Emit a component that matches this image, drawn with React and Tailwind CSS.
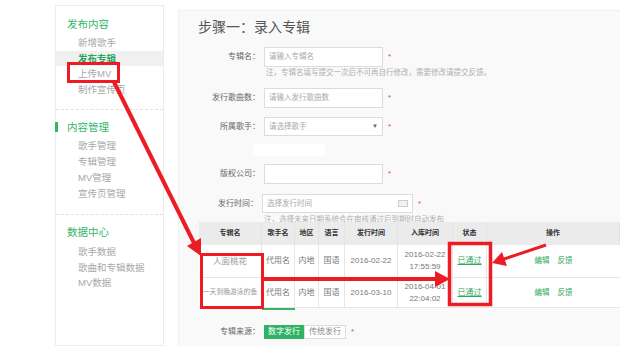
import React from "react";

const RED = "#ec1c24";

const menu = [
  {
    title: "发布内容",
    items: ["新增歌手", "发布专辑", "上传MV", "制作宣传页"],
    active: "发布专辑",
    step: "h-[15.5px] leading-[15.5px]",
  },
  {
    title: "内容管理",
    items: ["歌手管理", "专辑管理", "MV管理", "宣传页管理"],
    bar: true,
    step: "h-[16px] leading-[16px]",
  },
  {
    title: "数据中心",
    items: ["歌手数据", "歌曲和专辑数据", "MV数据"],
    step: "h-[15.5px] leading-[15.5px]",
  },
];

const cols = ["专辑名", "歌手名", "地区", "语言", "发行时间", "入库时间", "状态", "操作"];

const rows = [
  {
    name: "人面桃花",
    nameSize: "text-[8.5px]",
    date: "2016-02-22",
    stored: ["2016-02-22", "17:55:59"],
    h: "h-[33px]",
  },
  {
    name: "一天到晚游泳的鱼",
    nameSize: "text-[6.8px]",
    date: "2016-03-10",
    stored: ["2016-04-01", "22:04:02"],
    h: "h-[30px]",
  },
];

function Sidebar() {
  return (
    <div className="ml-[55px] mt-[5px] w-[109px] shrink-0 border border-[#ececec] bg-white">
      {menu.map((sec, i) => (
        <div key={sec.title}>
          {i > 0 && <div className="mt-[12px] border-t border-dashed border-[#e2e2e2]" />}
          <div
            className={`relative h-[14px] leading-[14px] text-[10.5px] text-[#35b56a] pl-[11px] ${
              i === 0 ? "mt-[11px]" : "mt-[10px]"
            }`}
          >
            {sec.bar && <span className="absolute left-[-1px] top-[2px] h-[10px] w-[3px] bg-[#35b56a]" />}
            {sec.title}
          </div>
          <div className={i === 2 ? "mt-[5px]" : "mt-[4px]"}>
            {sec.items.map((it) => (
              <div
                key={it}
                className={`${sec.step} pl-[22px] text-[9.5px] ${
                  it === sec.active ? "bg-[#f0f0f0] text-[#27a35a] font-bold" : "text-[#a8a8a8]"
                }`}
              >
                {it}
              </div>
            ))}
          </div>
        </div>
      ))}
    </div>
  );
}

function Field({ label, labelW = "w-[62px]", boxW = "w-[119px]", h = "h-[20px]", mt, placeholder, children }) {
  return (
    <div className={`flex items-center ${mt}`}>
      <div className={`${labelW} text-right text-[8px] text-[#666]`}>{label}</div>
      <div
        className={`ml-[4px] ${boxW} ${h} flex items-center justify-between bg-white border border-[#dcdcdc] pl-[4px] pr-[4px] text-[7.5px] text-[#aaa]`}
      >
        <span>{placeholder}</span>
        {children}
      </div>
      <span className="ml-[5px] text-[8px] text-[#e04848]">*</span>
    </div>
  );
}

function AlbumTable() {
  const grid = "grid grid-cols-[63px_33px_24px_26px_53px_55px_34px_1fr]";
  return (
    <div className="ml-[1px] w-[421px]">
      <div className={`${grid} h-[23px] bg-[#ebebeb] text-[7px] font-bold text-[#333]`}>
        {cols.map((c) => (
          <div key={c} className="flex items-center justify-center border-r border-[#e2e2e2]">
            {c}
          </div>
        ))}
      </div>
      {rows.map((r) => (
        <div key={r.name} className={`${grid} ${r.h} bg-white border-b border-[#e6e6e6] text-[8px] text-[#777]`}>
          <div className={`flex items-center justify-center border-r border-[#e6e6e6] ${r.nameSize} text-[#999]`}>
            {r.name}
          </div>
          <div className="flex items-center justify-center border-r border-[#e6e6e6]">代用名</div>
          <div className="flex items-center justify-center border-r border-[#e6e6e6]">内地</div>
          <div className="flex items-center justify-center border-r border-[#e6e6e6]">国语</div>
          <div className="flex items-center justify-center border-r border-[#e6e6e6]">{r.date}</div>
          <div className="flex flex-col items-center justify-center leading-[12px] border-r border-[#e6e6e6]">
            <span>{r.stored[0]}</span>
            <span>{r.stored[1]}</span>
          </div>
          <div className="flex items-center justify-center border-r border-[#e6e6e6]">
            <span className="text-[#2fa85e] underline">已通过</span>
          </div>
          <div className="flex items-center justify-center gap-[8px] text-[#2fa85e] text-[7.5px]">
            <span>编辑</span>
            <span>反馈</span>
          </div>
        </div>
      ))}
      <div className="ml-[63px] h-[2px] w-[33px] bg-[#35b56a]" />
    </div>
  );
}

function Annotations() {
  return (
    <svg className="absolute left-0 top-0 pointer-events-none" width="620" height="346" viewBox="0 0 620 346">
      <g fill="none" stroke={RED}>
        <rect x="68.5" y="63.5" width="50" height="18" strokeWidth="3" />
        <rect x="201.5" y="254.5" width="61" height="53" strokeWidth="3" />
        <rect x="449.5" y="243.5" width="41" height="61" strokeWidth="3.5" />
        <line x1="114" y1="82" x2="195" y2="245" strokeWidth="4" />
        <line x1="263" y1="279" x2="438" y2="279" strokeWidth="4" />
        <line x1="546" y1="245" x2="504" y2="259" strokeWidth="3" />
      </g>
      <g fill={RED}>
        <polygon points="201,256 201,238 187,246" />
        <polygon points="450,279 435,271 435,287" />
        <polygon points="492,263 507,266 502,252" />
      </g>
    </svg>
  );
}

export default function App() {
  return (
    <div className="relative flex w-[620px] h-[346px] overflow-hidden bg-white font-['Liberation_Sans','Noto_Sans_CJK_SC',sans-serif]">
      <Sidebar />

      <div className="ml-[14px] mt-[10px] flex-1 min-w-0 bg-[#f9f9f9] border-l border-t border-[#f0f0f0] pl-[19px]">
        <div className="mt-[6px] h-[20px] leading-[20px] text-[14px] text-[#555]">步骤一：录入专辑</div>

        <Field mt="mt-[10px]" label="专辑名：" placeholder="请输入专辑名" />
        <div className="h-[12px] leading-[12px] pl-[68px] text-[7.5px] text-[#b0b0b0] whitespace-nowrap">
          注，专辑名填写提交一次后不可再自行修改，需要修改请提交反馈。
        </div>

        <Field mt="mt-[9px]" label="发行歌曲数：" placeholder="请输入发行歌曲数" />

        <Field mt="mt-[9px]" h="h-[19px]" label="所属歌手：" placeholder="请选择歌手">
          <span className="text-[6px] text-[#666]">▼</span>
        </Field>

        <div className="mt-[8px] ml-[55px] h-[12px] w-[72px] bg-white" />

        <Field mt="mt-[8px]" label="版权公司：" placeholder="" />

        <Field mt="mt-[10px]" h="h-[19px]" labelW="w-[60px]" boxW="w-[151px]" label="发行时间：" placeholder="选择发行时间">
          <span className="h-[7px] w-[10px] border border-[#ccc] bg-[#f2f2f2]" />
        </Field>

        <div className="mt-[1px] h-[8px] overflow-hidden pl-[66px]">
          <div className="leading-[12px] text-[7.5px] text-[#b0b0b0] whitespace-nowrap">
            注，选择未来日期系统会在审核通过后到期时自动发布
          </div>
        </div>

        <AlbumTable />

        <div className="mt-[15px] flex items-center">
          <div className="w-[62px] text-right text-[8px] text-[#666]">专辑来源：</div>
          <div className="ml-[4px] flex h-[14px] text-[8px]">
            <span className="flex items-center bg-[#2fb364] px-[4px] text-white">数字发行</span>
            <span className="flex items-center border border-[#dcdcdc] bg-white px-[4px] text-[#888]">传统发行</span>
          </div>
          <span className="ml-[5px] text-[8px] text-[#e04848]">*</span>
        </div>
      </div>

      <Annotations />
    </div>
  );
}
